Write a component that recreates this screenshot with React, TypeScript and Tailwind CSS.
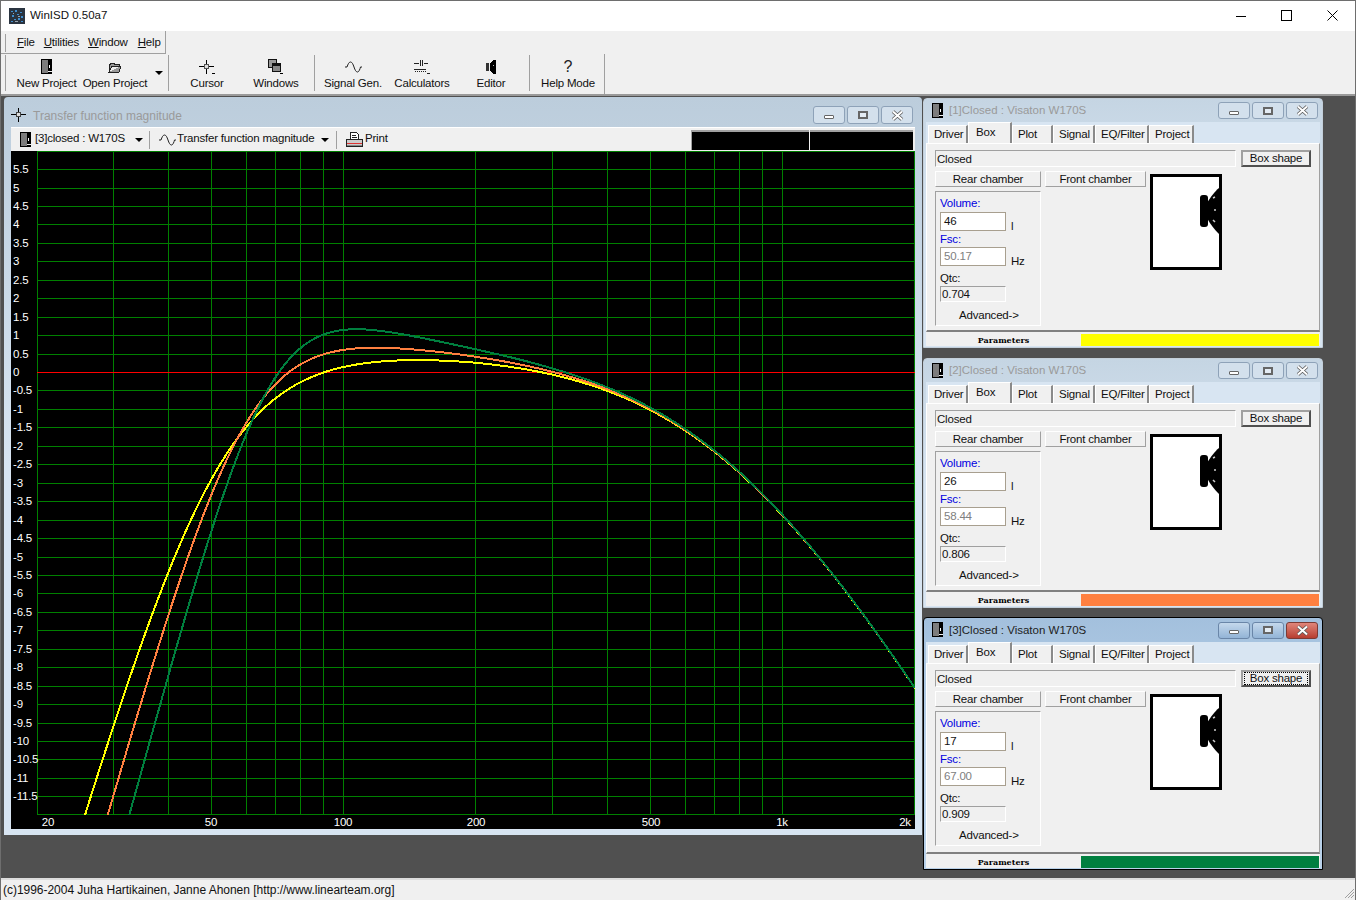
// App.tsx - WinISD main window
import React from 'react'

const font = { fontFamily: '"Liberation Sans", Arial, sans-serif' }
// the dialog font in the picture is narrower than Arial
const ui = 'text-[11.5px] tracking-[-0.2px]'

// x position of a frequency on the plot (log scale), y position of a dB value
const fx = (f: number) => 343.5 + Math.log10(f / 100) * 439
const dy = (db: number) => 372.5 - db * 36.9

const gridFreqs = [30, 40, 50, 60, 70, 80, 90, 100, 200, 300, 400, 500, 600, 700, 800, 900, 1000]
const xLabels: [string, number][] = [['20', 48], ['50', 211], ['100', 343], ['200', 476], ['500', 651], ['1k', 782], ['2k', 905]]
const yTicks = Array.from({ length: 35 }, (_, i) => 5.5 - i * 0.5)

// driver response on top of the box high-pass: first order roll-off from the voice coil
function correction(f: number) {
  const base = 0.6 - 0.8 / (1 + (f / 50) ** 3)
  return base - 10 * Math.log10(1 + (f / 745) ** 2)
}

function curve(fsc: number, q: number) {
  const pts: string[] = []
  for (let px = 37; px <= 915; px += 2) {
    const f = 100 * Math.pow(10, (px - 343.5) / 439)
    const x = f / fsc
    const h = (x * x) / Math.sqrt((1 - x * x) ** 2 + (x / q) ** 2)
    pts.push(`${px},${dy(20 * Math.log10(h) + correction(f)).toFixed(1)}`)
  }
  return pts.join(' ')
}

const panels = [
  { n: 1, volume: '46', fsc: '50.17', qtc: '0.704', color: 'bg-[#ffff00]', q: 0.704, f: 50.17, active: false },
  { n: 2, volume: '26', fsc: '58.44', qtc: '0.806', color: 'bg-[#ff8040]', q: 0.806, f: 58.44, active: false },
  { n: 3, volume: '17', fsc: '67.00', qtc: '0.909', color: 'bg-[#007f3f]', q: 0.909, f: 67, active: true },
]

function DocIcon({ className = '' }: { className?: string }) {
  return (
    <svg width="11" height="16" viewBox="0 0 11 16" className={className} shapeRendering="crispEdges">
      <rect x="0" y="0" width="11" height="15" fill="#000" />
      <rect x="1" y="1" width="6" height="13" fill="#7d7d7d" />
      <rect x="8" y="6" width="1" height="3" fill="#fff" />
      <rect x="7" y="12" width="4" height="1" fill="#f0f0f0" />
    </svg>
  )
}

function OpenIcon() {
  return (
    <svg width="14" height="11" viewBox="0 0 14 11" shapeRendering="crispEdges">
      <path d="M1 10V2h1V1h4v1h5v2H4L1 10h10l2-6" fill="#9a9a9a" stroke="#222" strokeWidth="1" />
    </svg>
  )
}

function CursorIcon({ small = false }: { small?: boolean }) {
  return (
    <svg width="16" height="16" viewBox="0 0 16 16" shapeRendering="crispEdges">
      <path d="M7 1h1v14H7zM0 7h15v1H0z" fill="#000" />
      <rect x="5" y="5" width="5" height="5" fill={small ? '#444' : '#555'} />
      <rect x="6" y="6" width="3" height="3" fill="#ddd" />
      {!small && <rect x="13" y="14" width="3" height="1" fill="#000" />}
    </svg>
  )
}

function WindowsIcon() {
  return (
    <svg width="16" height="16" viewBox="0 0 16 16" shapeRendering="crispEdges">
      <rect x="0.5" y="0.5" width="8" height="8" fill="#999" stroke="#111" />
      <rect x="4.5" y="4.5" width="8" height="8" fill="#888" stroke="#111" />
      <rect x="5" y="5" width="7" height="2" fill="#111" />
      <rect x="12" y="14" width="3" height="1" fill="#000" />
    </svg>
  )
}

function SineIcon() {
  return (
    <svg width="17" height="12" viewBox="0 0 17 12" fill="none" stroke="#222">
      <path d="M0 6h2c1-3 2-5 3.500-5S8 3 9 6c1 3 2 5 3.500 5S15 8 15.500 6H17" />
    </svg>
  )
}

function CalcIcon() {
  return (
    <svg width="16" height="14" viewBox="0 0 16 14" shapeRendering="crispEdges" fill="#222">
      <path d="M0 3h5v1H0zM6 0h1v6H6zM8 0h1v6H8zM10 3h4v1h-4zM0 9h12v1H0zM1 11h1v1H1zM3 11h1v1H3zM5 11h1v1H5zM7 11h1v1H7zM9 11h1v1H9zM11 11h1v1h-1zM13 13h3v1h-3z" />
    </svg>
  )
}

function EditorIcon() {
  return (
    <svg width="11" height="16" viewBox="0 0 11 16" shapeRendering="crispEdges">
      <rect x="0" y="4" width="3" height="8" fill="#333" />
      <path d="M4 4h1V3h1V2h1V1h3v14H7v-1H6v-1H5v-1H4z" fill="#000" />
      <rect x="7" y="6" width="1" height="1" fill="#bbb" />
    </svg>
  )
}

function PrintIcon() {
  return (
    <svg width="17" height="16" viewBox="0 0 17 16" shapeRendering="crispEdges">
      <path d="M4.500.500h6l2 2v5h-8z" fill="#fff" stroke="#222" />
      <path d="M6 3h4M6 5h5" stroke="#222" />
      <rect x="0.500" y="7.500" width="16" height="7" fill="#ccc" stroke="#222" />
      <rect x="1" y="11" width="15" height="1" fill="#d33" />
      <rect x="1" y="13" width="15" height="1" fill="#888" />
    </svg>
  )
}

function Arrow() {
  return <span className="block w-0 h-0 border-x-[4px] border-x-transparent border-t-[4px] border-t-black" />
}

function Separator({ className = '' }: { className?: string }) {
  return <span className={`block w-px shrink-0 bg-[#a0a0a0] ${className}`} />
}

function ToolButton({ label, width, children }: { label: string; width: string; children: React.ReactNode }) {
  return (
    <div className={`${width} shrink-0 flex flex-col items-center`}>
      <div className="h-[16px] mt-[5px] flex items-center justify-center">{children}</div>
      <div className={`${ui} leading-[14px] mt-[1px] whitespace-nowrap text-[#111]`}>{label}</div>
    </div>
  )
}

function MdiButtons({ active = false, small = false }: { active?: boolean; small?: boolean }) {
  const base = `${small ? 'h-[17px]' : 'h-[18px]'} w-[32px] rounded-[3px] border flex items-center justify-center`
  const tone = active ? 'border-[#6a86a8] bg-gradient-to-b from-[#c4d8ec] to-[#93b4d6]' : 'border-[#8ea2b8] bg-[#d3e0ec]'
  return (
    <div className="flex gap-[2px]">
      <div className={`${base} ${tone}`}>
        <span className="block w-[10px] h-[4px] mt-[4px] bg-white border border-[#666] rounded-[1px]" />
      </div>
      <div className={`${base} ${tone}`}>
        <span className="block w-[10px] h-[8px] border-2 border-[#666] bg-[#e4ecf4]" />
      </div>
      <div className={`${base} ${active ? 'border-[#7c3a34] bg-gradient-to-b from-[#e0857a] to-[#b73d30]' : tone}`}>
        <svg width="13" height="11" viewBox="0 0 13 11">
          <path d="M2 1.500l9 8M11 1.500l-9 8" stroke="#555" strokeWidth="3.500" />
          <path d="M2 1.500l9 8M11 1.500l-9 8" stroke="#fff" strokeWidth="2" />
        </svg>
      </div>
    </div>
  )
}

function RaisedButton({ label, width }: { label: string; width: string }) {
  return (
    <div className={`${width} ${ui} h-[16px] shrink-0 pt-[1px] border-t border-l border-white border-b border-r border-b-[#a0a0a0] border-r-[#a0a0a0] flex items-center justify-center leading-none text-[#111]`}>
      {label}
    </div>
  )
}

function SpeakerBox() {
  return (
    <svg width="72" height="96" viewBox="0 0 72 96" className="mt-[3px] ml-[4px] shrink-0">
      <rect x="1.500" y="1.500" width="69" height="93" fill="#fff" stroke="#000" strokeWidth="3" />
      <rect x="50" y="21" width="8" height="32" rx="3" fill="#000" />
      <path d="M57 29 C60 24 65 17 69 14 V60 C65 56 60 50 57 44Z" fill="#000" />
      <path d="M63 24l2-1M64 36h2M63 46l2 2" stroke="#ccc" strokeWidth="1.500" />
    </svg>
  )
}

function Panel({ n, volume, fsc, qtc, color, active }: (typeof panels)[number]) {
  const tabs = [
    { name: 'Driver', w: 'w-[40px]' },
    { name: 'Box', w: 'w-[44px]' },
    { name: 'Plot', w: 'w-[41px]' },
    { name: 'Signal', w: 'w-[42px]' },
    { name: 'EQ/Filter', w: 'w-[54px]' },
    { name: 'Project', w: 'w-[45px]' },
  ]
  return (
    <div className={`w-[400px] shrink-0 rounded-t-[4px] border flex flex-col px-[2px] pb-[1px] ${active ? 'h-[253px] border-black bg-gradient-to-b from-[#a3c0dd] via-[#b9d1e9] to-[#b9d1e9]' : 'h-[250px] border-[#c3cfda] bg-gradient-to-b from-[#c5d5e3] via-[#d8e5f2] to-[#d8e5f2]'}`}>
      <div className={`${active ? 'h-[24px]' : 'h-[23px]'} shrink-0 flex items-center pl-[6px] pr-[2px]`}>
        <DocIcon />
        <span className={`ml-[6px] pt-[1px] text-[11.5px] ${active ? 'text-[#222]' : 'text-[#9a9a9a]'}`}>[{n}]Closed : Visaton W170S</span>
        <span className="flex-1" />
        <MdiButtons active={active} small />
      </div>
      <div className="flex-1 flex flex-col bg-[#f0f0f0] min-h-0">
        <div className="h-[21px] shrink-0 flex items-end pl-[2px] bg-[#d8e5f2]">
          {tabs.map(t => (
            <div
              key={t.name}
              className={`${t.w} ${ui} shrink-0 pl-[5px] text-[#111] border-r-2 border-r-[#8a8a8a] bg-[#f0f0f0] ${t.name === 'Box' ? 'h-[21px] border-t border-l border-white leading-[19px] pl-[7px]' : 'h-[18px] border-l border-t border-white leading-[17px]'}`}
            >
              {t.name}
            </div>
          ))}
        </div>
        <div className="flex-1 min-h-0 border border-white border-r-[#a0a0a0] border-b-[#808080] border-b-2 pl-[8px] pt-[6px]">
          <div className="flex h-[17px]">
            <div className={`${ui} w-[301px] h-[17px] border-t border-l border-[#a0a0a0] border-b border-r border-b-white border-r-white pl-[1px] leading-[16px] text-[#111]`}>Closed</div>
            <div className={`${ui} ml-[5px] w-[70px] h-[17px] border-2 border-t-[#a0a0a0] border-l-[#a0a0a0] border-b-[#505050] border-r-[#505050] flex items-center justify-center leading-none text-[#111]`}>
              <span className={active ? 'border border-dotted border-black w-[64px] text-center' : ''}>Box shape</span>
            </div>
          </div>
          <div className="flex mt-[4px]">
            <div className="w-[106px] shrink-0">
              <RaisedButton label="Rear chamber" width="w-[106px]" />
              <div className={`${ui} mt-[4px] h-[135px] border-t border-l border-[#a0a0a0] border-b border-r border-b-white border-r-white pl-[4px] pt-[4px] text-[#111]`}>
                <div className="h-[14px] leading-[14px] text-[#0000e0]">Volume:</div>
                <div className="flex items-end mt-[2px]">
                  <div className="w-[66px] h-[19px] border border-[#a89f8f] bg-white pl-[3px] leading-[17px]">{volume}</div>
                  <span className="ml-[5px] leading-[12px] mb-[-1px]">l</span>
                </div>
                <div className="h-[14px] leading-[14px] text-[#0000e0] mt-[1px]">Fsc:</div>
                <div className="flex items-end mt-[1px]">
                  <div className="w-[66px] h-[19px] border border-[#a89f8f] bg-white pl-[3px] leading-[17px] text-[#808080]">{fsc}</div>
                  <span className="ml-[5px] leading-[12px] mb-[-1px]">Hz</span>
                </div>
                <div className="h-[14px] leading-[14px] mt-[5px]">Qtc:</div>
                <div className="w-[66px] h-[16px] mt-[1px] border-t border-l border-[#a0a0a0] border-b border-r border-b-white border-r-white pl-[1px] leading-[15px]">{qtc}</div>
                <div className="mt-[6px] h-[14px] leading-[14px] pl-[19px]">Advanced-&gt;</div>
              </div>
            </div>
            <div className="ml-[4px] shrink-0">
              <RaisedButton label="Front chamber" width="w-[101px]" />
            </div>
            <SpeakerBox />
          </div>
        </div>
        <div className="h-[14px] shrink-0 flex items-center pt-[2px]">
          <div className="w-[155px] text-center text-[8px] leading-[12px] font-bold text-black" style={{ fontFamily: '"DejaVu Serif", serif' }}>Parameters</div>
          <div className={`flex-1 h-[12px] mr-[1px] ${color}`} />
        </div>
      </div>
    </div>
  )
}

function Plot() {
  return (
    <svg width="904" height="678" viewBox="11 151 904 678" className="block bg-black" style={font}>
      <defs>
        <clipPath id="plot-area"><rect x="37" y="151" width="878" height="664" /></clipPath>
      </defs>
      <g stroke="#008000" shapeRendering="crispEdges">
        <line x1="37.500" y1="151" x2="37.500" y2="815" />
        <line x1="914.500" y1="151" x2="914.500" y2="815" />
        <line x1="37" y1="151.500" x2="915" y2="151.500" />
        <line x1="37" y1="814.500" x2="915" y2="814.500" />
        {gridFreqs.map(f => {
          const x = Math.floor(fx(f)) + 0.5
          return <line key={f} x1={x} y1="151" x2={x} y2="815" />
        })}
        {yTicks.map(v => {
          const y = Math.floor(dy(v)) + 0.5
          return <line key={v} x1="37" y1={y} x2="915" y2={y} stroke={v === 0 ? '#ff0000' : '#008000'} />
        })}
      </g>
      <g clipPath="url(#plot-area)" fill="none" strokeWidth="2" shapeRendering="crispEdges">
        {panels.map(p => (
          <polyline key={p.n} points={curve(p.f, p.q)} stroke={p.n === 1 ? '#ffff00' : p.n === 2 ? '#ff8040' : '#007f3f'} />
        ))}
      </g>
      <g fill="#fff" fontSize="11.5" letterSpacing="-0.2">
        {yTicks.map(v => (
          <text key={v} x="13" y={Math.floor(dy(v)) + 4}>{String(v)}</text>
        ))}
        {xLabels.map(([t, x]) => (
          <text key={t} x={x} y="826" textAnchor="middle">{t}</text>
        ))}
      </g>
    </svg>
  )
}

export default function App() {
  return (
    <div className="w-[1356px] h-[900px] overflow-hidden flex flex-col bg-[#f0f0f0] border border-[#6e6e6e] border-b-0 text-black" style={font}>
      {/* title bar */}
      <div className="h-[30px] shrink-0 bg-white flex items-center pl-[8px]">
        <svg width="16" height="16" viewBox="0 0 16 16" shapeRendering="crispEdges">
          <rect width="16" height="16" fill="#2a3440" />
          <path d="M2 3h2v1H2zM6 2h2v2H6zM11 4h2v1h-2zM3 7h2v2H3zM8 6h2v1H8zM12 8h2v2h-2zM5 11h2v1H5zM9 10h2v2H9zM2 13h2v1H2zM12 13h2v1h-2z" fill="#3f8fd0" />
          <path d="M4 5h1v1H4zM9 8h2v1H9zM6 13h3v1H6z" fill="#9aa6b0" />
        </svg>
        <span className="ml-[5px] text-[11.5px] text-[#111]">WinISD 0.50a7</span>
        <span className="flex-1" />
        <div className="flex items-center text-black">
          <svg width="46" height="30" viewBox="0 0 46 30" shapeRendering="crispEdges"><rect x="19" y="15" width="10" height="1" fill="#000" /></svg>
          <svg width="46" height="30" viewBox="0 0 46 30" shapeRendering="crispEdges"><rect x="18.500" y="9.500" width="10" height="10" fill="none" stroke="#000" /></svg>
          <svg width="46" height="30" viewBox="0 0 46 30"><path d="M18.500 9.500l10 10M28.500 9.500l-10 10" stroke="#000" /></svg>
        </div>
      </div>

      {/* menu */}
      <div className="h-[23px] shrink-0 flex">
        <div className={`${ui} w-[165px] border-r border-b border-[#a0a0a0] flex items-center pl-[4px] pt-[1px] text-[#111]`}>
          <Separator className="h-[18px] mr-[11px]" />
          <span className="mr-[9px]"><u>F</u>ile</span>
          <span className="mr-[9px]"><u>U</u>tilities</span>
          <span className="mr-[10px]"><u>W</u>indow</span>
          <span><u>H</u>elp</span>
        </div>
      </div>

      {/* toolbar */}
      <div className="h-[40px] shrink-0 flex">
        <div className="w-[604px] border-r border-[#a0a0a0] flex items-stretch pl-[4px]">
          <Separator className="h-[36px] my-[1px] mr-[7px]" />
          <ToolButton label="New Project" width="w-[67px]"><DocIcon /></ToolButton>
          <ToolButton label="Open Project" width="w-[70px]"><OpenIcon /></ToolButton>
          <div className="w-[18px] shrink-0 flex justify-center pt-[17px]"><Arrow /></div>
          <Separator className="h-[36px] my-[1px]" />
          <ToolButton label="Cursor" width="w-[76px]"><CursorIcon /></ToolButton>
          <ToolButton label="Windows" width="w-[62px]"><WindowsIcon /></ToolButton>
          <span className="w-[7px] shrink-0" />
          <Separator className="h-[36px] my-[1px]" />
          <ToolButton label="Signal Gen." width="w-[76px]"><SineIcon /></ToolButton>
          <ToolButton label="Calculators" width="w-[62px]"><CalcIcon /></ToolButton>
          <ToolButton label="Editor" width="w-[76px]"><EditorIcon /></ToolButton>
          <Separator className="h-[36px] my-[1px]" />
          <ToolButton label="Help Mode" width="w-[76px]"><span className="text-[16px] leading-none text-[#222]">?</span></ToolButton>
        </div>
      </div>

      {/* MDI client */}
      <div className="flex-1 min-h-0 bg-[#505050] border-t-[2px] border-[#9a9a9a] flex pl-[3px] pt-[1px] gap-[1px]">
        <div className="w-[918px] h-[738px] shrink-0 rounded-t-[4px] bg-gradient-to-b from-[#bccddc] via-[#d8e5f2] to-[#d8e5f2] flex flex-col px-[7px] pb-[6px]">
          <div className="h-[30px] shrink-0 flex items-center pt-[6px] pr-[2px]">
            <CursorIcon small />
            <span className="ml-[6px] mt-[1px] text-[12px] text-[#9a9a9a]">Transfer function magnitude</span>
            <span className="flex-1" />
            <MdiButtons />
          </div>
          <div className={`${ui} h-[24px] shrink-0 bg-[#f0f0f0] border-t border-white flex items-center text-[#111]`}>
            <DocIcon className="ml-[9px]" />
            <span className="ml-[4px] w-[100px] whitespace-nowrap pb-[1px]">[3]closed : W170S</span>
            <Arrow />
            <Separator className="h-[18px] ml-[6px]" />
            <span className="ml-[9px]"><SineIcon /></span>
            <span className="ml-[1px] w-[144px] whitespace-nowrap pb-[1px]">Transfer function magnitude</span>
            <Arrow />
            <Separator className="h-[18px] ml-[7px]" />
            <span className="ml-[9px]"><PrintIcon /></span>
            <span className="ml-[2px] pb-[1px]">Print</span>
            <span className="flex-1" />
            <div className="w-[118px] h-[20px] bg-black border-t-2 border-l border-[#a0a0a0]" />
            <div className="w-[103px] h-[20px] ml-[1px] mr-[2px] bg-black border-t-2 border-[#a0a0a0]" />
          </div>
          <Plot />
        </div>
        <div className="w-[400px] shrink-0 flex flex-col pt-[1px]">
          <Panel {...panels[0]} />
          <div className="h-[10px] shrink-0" />
          <Panel {...panels[1]} />
          <div className="h-[9px] shrink-0" />
          <Panel {...panels[2]} />
        </div>
      </div>

      {/* status bar */}
      <div className="h-[22px] shrink-0 border-t-2 border-[#dcdcdc] flex items-center pl-[2px] relative">
        <span className="text-[12px] tracking-[-0.03px] text-[#111] whitespace-nowrap">(c)1996-2004 Juha Hartikainen, Janne Ahonen [http://www.linearteam.org]</span>
        <svg width="12" height="12" viewBox="0 0 12 12" className="absolute right-0 bottom-[1px]">
          <path d="M11 2L2 11M11 5l-6 6M11 8l-3 3" stroke="#a0a0a0" />
        </svg>
      </div>
    </div>
  )
}
